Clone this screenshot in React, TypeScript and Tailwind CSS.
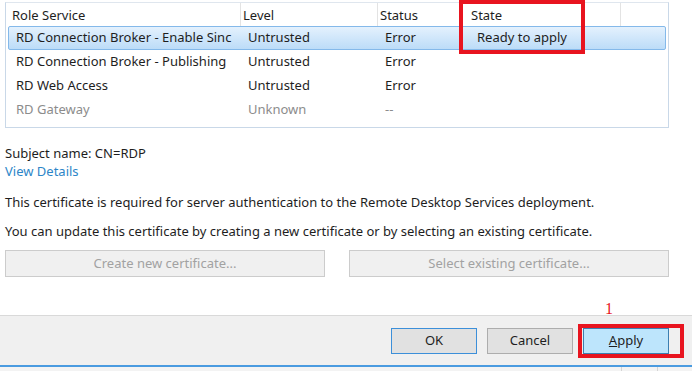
import React from 'react';

const cols = ['w-[235px]', 'w-[137px]', 'w-[85px]', 'w-[158px]', 'w-[46px]'];
const headPad = ['pl-[6px]', 'pl-[2px]', 'pl-[2px]', 'pl-[8px]', 'pl-[2px]'];

const rows = [
  { name: 'RD Connection Broker - Enable Sinc', level: 'Untrusted', status: 'Error', state: 'Ready to apply', selected: true },
  { name: 'RD Connection Broker - Publishing', level: 'Untrusted', status: 'Error', state: '' },
  { name: 'RD Web Access', level: 'Untrusted', status: 'Error', state: '' },
  { name: 'RD Gateway', level: 'Unknown', status: '--', state: '', muted: true },
];

export default function App() {
  return (
    <div className="relative w-[692px] h-[371px] bg-white overflow-hidden flex flex-col text-[13px] text-[#1e1e1e]" style={{ fontFamily: '"Noto Sans", "Open Sans", sans-serif' }}>
      {/* role services list */}
      <div className="ml-[5px] mt-[2px] w-[664px] h-[126px] border border-[#c9d8e8] border-t-[#dfe6ee] flex flex-col">
        <div className="flex h-[23px] items-center">
          {['Role Service', 'Level', 'Status', 'State', ''].map((h, i) => (
            <div key={i} className={`${cols[i]} h-full flex items-center pt-[2px] ${i < 4 ? 'border-r border-[#e3e3e3]' : ''} ${headPad[i]}`}>
              {h}
            </div>
          ))}
        </div>
        <div className="flex flex-col px-[2px]">
          {rows.map((r) => (
            <div
              key={r.name}
              className={`flex h-[24px] items-center rounded-[2px] border ${r.selected ? 'border-[#84b9ea] bg-gradient-to-b from-[#e4f1fd] to-[#bcdcf8]' : 'border-transparent'} ${r.muted ? 'text-[#8c8c8c]' : ''}`}
            >
              <div className="w-[233px] pl-[7px] whitespace-nowrap overflow-hidden">{r.name}</div>
              <div className="w-[137px] pl-[6px]">{r.level}</div>
              <div className="w-[85px] pl-[6px]">{r.status}</div>
              <div className="w-[158px] pl-[13px]">{r.state}</div>
            </div>
          ))}
        </div>
      </div>

      {/* certificate details */}
      <div className="px-[5px] mt-[16px] flex flex-col">
        <div className="leading-[18px]">Subject name: CN=RDP</div>
        <div className="leading-[18px] text-[#2d86c8]">View Details</div>
        <div className="leading-[18px] mt-[13px]">This certificate is required for server authentication to the Remote Desktop Services deployment.</div>
        <div className="leading-[18px] mt-[11px]">You can update this certificate by creating a new certificate or by selecting an existing certificate.</div>
        <div className="flex gap-[24px] mt-[10px] w-[664px]">
          <div className="w-[320px] h-[27px] flex items-center justify-center bg-[#f0f0f0] border border-[#cccccc] text-[#a2a2a2]">Create new certificate...</div>
          <div className="w-[320px] h-[27px] flex items-center justify-center bg-[#f0f0f0] border border-[#cccccc] text-[#a2a2a2]">Select existing certificate...</div>
        </div>
      </div>

      {/* dialog buttons */}
      <div className="mt-[38px] h-[50px] bg-[#f0f0f0] border-t border-[#d9d9d9] flex items-center justify-end gap-[10px] pr-[23px]">
        <div className="w-[86px] h-[26px] flex items-center justify-center bg-[#e1e1e1] border border-[#3c8fd9]">OK</div>
        <div className="w-[86px] h-[26px] flex items-center justify-center bg-[#e1e1e1] border border-[#adadad]">Cancel</div>
        <div className="relative w-[86px] h-[26px] flex items-center justify-center bg-[#bde5fc] border border-[#3c7fb1]">
          <span><span className="underline">A</span>pply</span>
          <div className="absolute left-[-6px] top-[-5px] w-[106px] h-[34px] border-[4px] border-[#e8141f]" />
          <div className="absolute left-[21px] top-[-29px] text-[16px] leading-[18px] text-[#e8141f]" style={{ fontFamily: '"Liberation Serif", serif' }}>1</div>
        </div>
      </div>
      <div className="h-[2px] bg-[#4a9be0]" />
      <div className="flex-1 bg-[#f3f3f3] flex">
        <div className="ml-[621px] w-[37px] border-x border-[#d4d4d4]" />
      </div>

      {/* highlight around the State column */}
      <div className="absolute left-[459px] top-[0px] w-[126px] h-[54px] border-[4px] border-[#e8141f]" />
    </div>
  );
}
